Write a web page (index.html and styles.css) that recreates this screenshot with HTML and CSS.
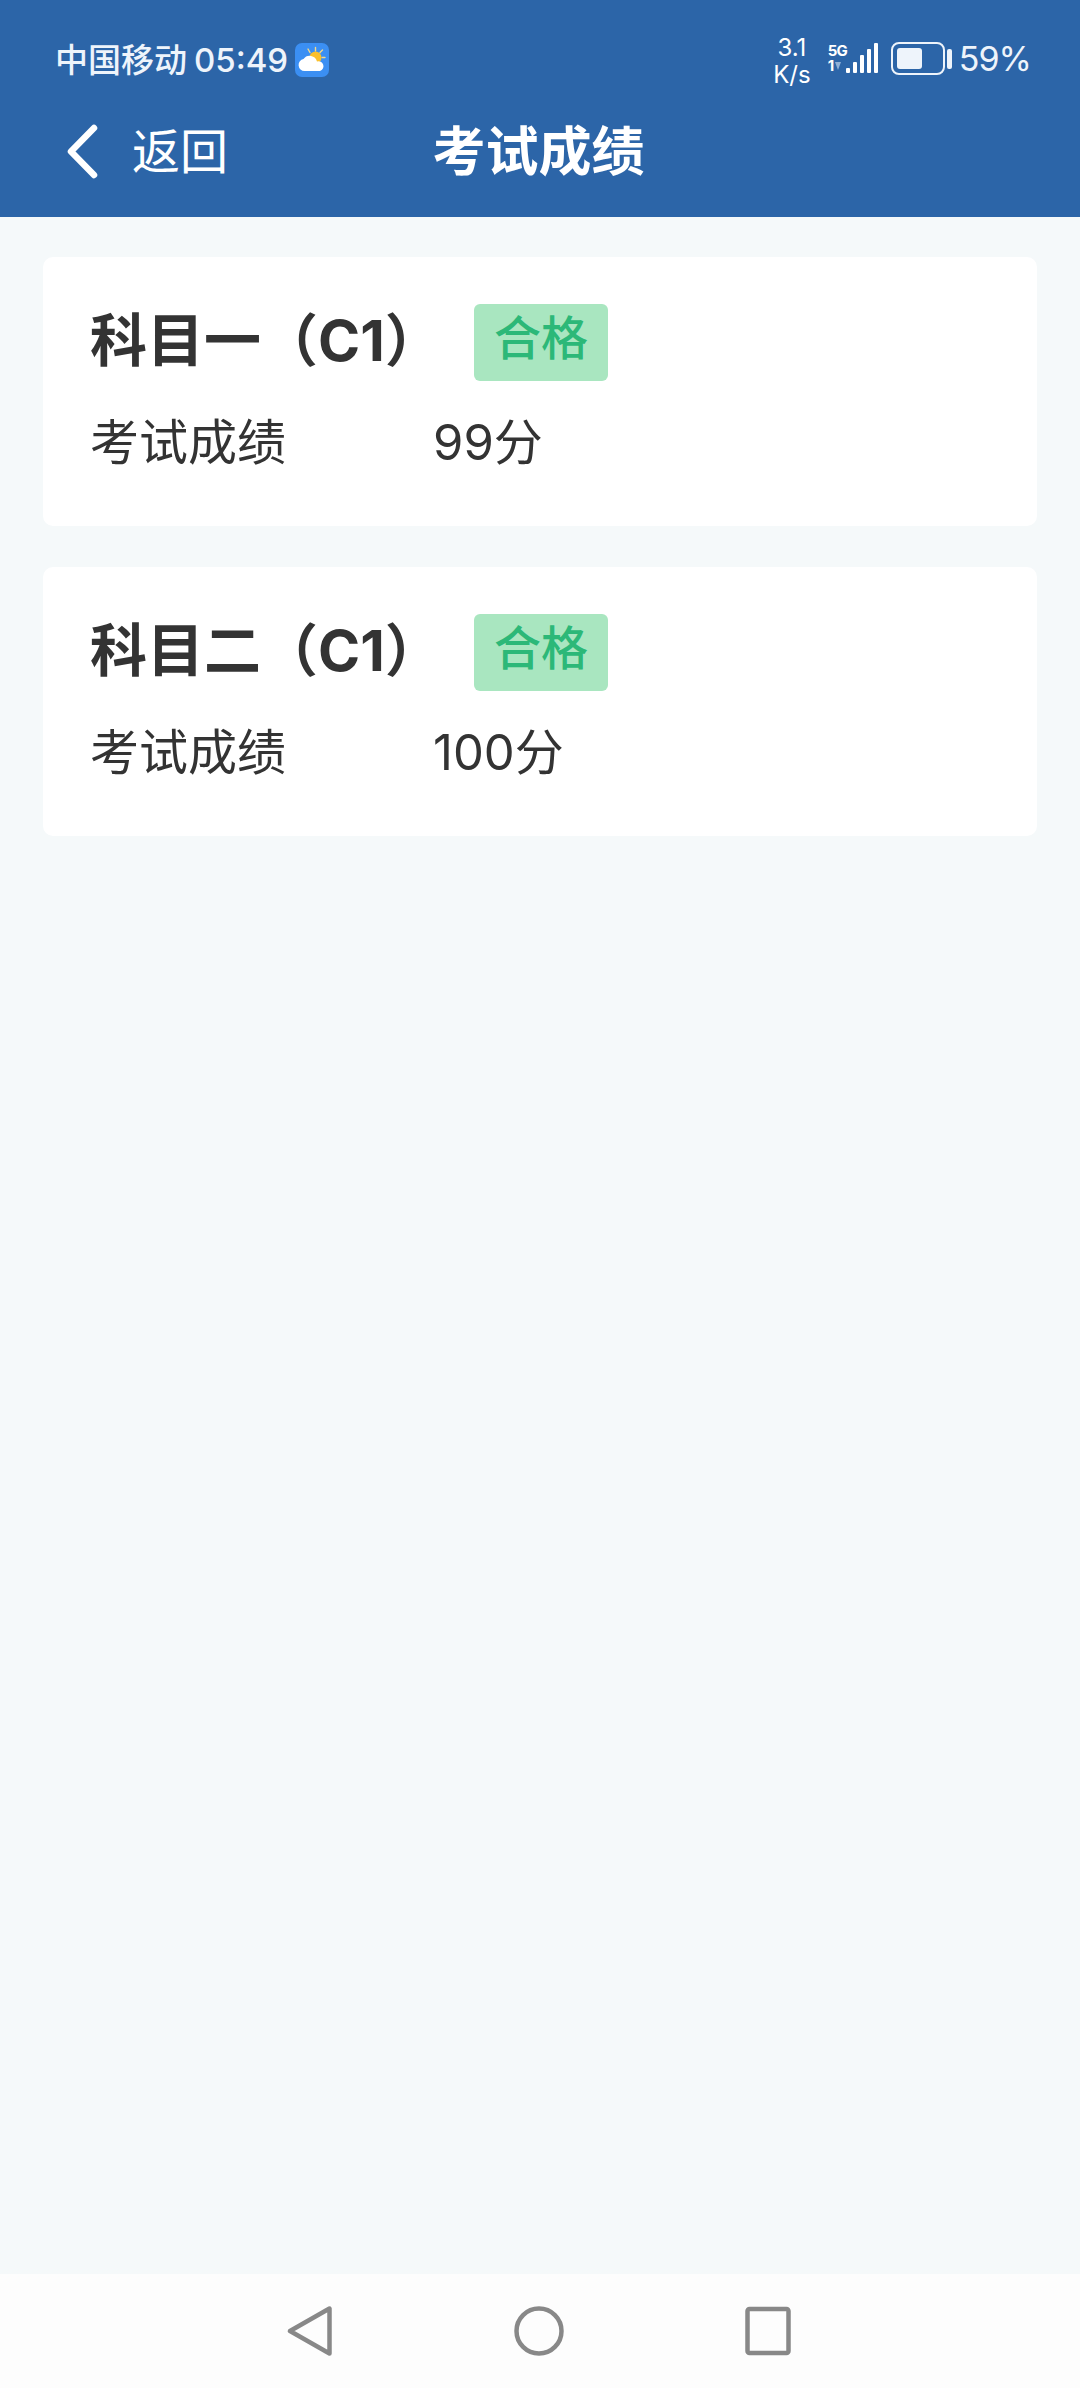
FILE: index.html
```html
<!DOCTYPE html>
<html lang="zh-CN">
<head>
<meta charset="utf-8">
<title>考试成绩</title>
<link rel="stylesheet" href="styles.css">
</head>
<body>
<header class="top">
  <div class="status">
    <div class="status-left">
      <span class="carrier">中国移动</span>
      <span class="time">05:49</span>
      <svg class="weather" viewBox="0 0 34 34" aria-hidden="true">
        <rect width="34" height="34" rx="7" fill="#3b8ff3"/>
        <g stroke="#f3d98a" stroke-width="1.4" stroke-linecap="round">
          <path d="M13 6l2 3.500M20.500 4.500v3.500M27.500 7l-2.500 2.500M30 14.500h-3"/>
        </g>
        <circle cx="20.500" cy="14.500" r="6" fill="#fbc02d"/>
        <path d="M9.500 28a6 6 0 0 1-1-11.900 7.500 7.500 0 0 1 13.500 2.400 4.800 4.800 0 0 1 3 9.500z" fill="#fff"/>
      </svg>
    </div>
    <div class="status-right">
      <div class="speed"><span>3.1</span><span>K/s</span></div>
      <div class="net"><span>5G</span><span class="net-low">1<i class="arrow"></i></span></div>
      <div class="bars">
        <i class="bar b1"></i><i class="bar b2"></i><i class="bar b3"></i><i class="bar b4"></i><i class="bar b5"></i>
      </div>
      <div class="battery"><div class="cell"><div class="charge"></div></div><i class="nub"></i></div>
      <span class="percent">59%</span>
    </div>
  </div>
  <nav class="titlebar">
    <div class="back">
      <svg class="chevron" viewBox="0 0 32 56" aria-hidden="true"><path d="M27 4L4 27.500 27 51" fill="none" stroke="#fff" stroke-width="6.500" stroke-linecap="round" stroke-linejoin="round"/></svg>
      <span>返回</span>
    </div>
    <h1 class="page-title">考试成绩</h1>
  </nav>
</header>
<main class="content">
  <section class="card">
    <div class="card-head"><h2 class="subject">科目一（C1）</h2><span class="badge">合格</span></div>
    <div class="score"><span class="score-label">考试成绩</span><span>99分</span></div>
  </section>
  <section class="card">
    <div class="card-head"><h2 class="subject">科目二（C1）</h2><span class="badge">合格</span></div>
    <div class="score"><span class="score-label">考试成绩</span><span>100分</span></div>
  </section>
</main>
<footer class="navbar">
  <svg class="nav-icon" viewBox="0 0 46 52" aria-hidden="true"><path d="M42.500 3.500v45L3 26z" fill="none" stroke="#888" stroke-width="4.500" stroke-linejoin="round"/></svg>
  <svg class="nav-icon" viewBox="0 0 50 52" aria-hidden="true"><circle cx="25" cy="26" r="22.500" fill="none" stroke="#888" stroke-width="4.500"/></svg>
  <svg class="nav-icon" viewBox="0 0 46 52" aria-hidden="true"><rect x="2.500" y="4" width="41" height="44" rx="2" fill="none" stroke="#888" stroke-width="4.500"/></svg>
</footer>
</body>
</html>
```
FILE: styles.css
```css
* { box-sizing: border-box; }
html, body { margin: 0; height: 100%; }
body {
  display: flex;
  flex-direction: column;
  width: 1080px;
  height: 2388px;
  background: #f5f9fa;
  font-family: Inter, "Noto Sans CJK SC", sans-serif;
  color: #333;
}
.top { height: 217px; background: #2c65a8; color: #fff; flex: none; }
.status {
  height: 95px;
  padding: 26px 49px 0 55px;
  display: flex;
  justify-content: space-between;
  align-items: flex-start;
}
.status-left { display: flex; align-items: center; height: 68px; color: #eef4fb; }
.carrier { font-size: 33px; font-weight: 500; line-height: 1; }
.time { font-size: 33px; font-weight: 500; line-height: 1; margin-left: 7px; }
.weather { width: 34px; height: 34px; margin-left: 7px; }
.status-right { display: flex; align-items: flex-start; height: 68px; }
.speed {
  display: flex;
  flex-direction: column;
  align-items: center;
  width: 38px;
  margin-top: 8px;
  font-size: 24px;
  line-height: 27px;
}
.net {
  display: flex;
  flex-direction: column;
  width: 18px;
  margin: 16px 0 0 17px;
  font-size: 15px;
  font-weight: 700;
  line-height: 17px;
  letter-spacing: -1px;
}
.net-low { display: flex; align-items: center; height: 13px; }
.arrow {
  width: 0;
  height: 0;
  margin-left: 2px;
  border-left: 3px solid transparent;
  border-right: 3px solid transparent;
  border-top: 8px solid #8fb0d6;
}
.bars { display: flex; align-items: flex-end; gap: 3px; height: 30px; margin: 17px 0 0 0; }
.bar { width: 4px; background: #fff; border-radius: 1px; }
.b1 { height: 5px; }
.b2 { height: 11px; }
.b3 { height: 18px; }
.b4 { height: 24px; }
.b5 { height: 30px; }
.battery { display: flex; align-items: center; height: 33px; margin: 16px 0 0 13px; }
.cell {
  width: 54px;
  height: 33px;
  padding: 4px;
  border: 2.500px solid #eef4fb;
  border-radius: 8px;
}
.charge { width: 25px; height: 100%; background: #eef4fb; border-radius: 3px; }
.nub { width: 5px; height: 20px; margin-left: 2px; background: #eef4fb; border-radius: 2px; }
.percent { font-size: 34px; line-height: 68px; margin-left: 7px; margin-top: -1px; letter-spacing: -1px; color: #eef4fb; }
.titlebar { position: relative; height: 122px; display: flex; align-items: center; justify-content: center; }
.back {
  position: absolute;
  left: 67px;
  top: 1px;
  height: 112px;
  display: flex;
  align-items: center;
  font-size: 48px;
}
.back span { margin-left: 33px; margin-top: -9px; }
.chevron { width: 32px; height: 56px; }
.page-title { margin: 0 3px 6px 0; font-size: 53px; font-weight: 700; line-height: 1.2; }
.content {
  flex: 1;
  display: flex;
  flex-direction: column;
  gap: 41px;
  padding: 40px 43px;
}
.card {
  height: 269px;
  padding: 47px 47px 0;
  background: #fff;
  border-radius: 10px;
}
.card-head { display: flex; align-items: center; height: 77px; }
.subject { margin: 0 0 4px; width: 384px; font-size: 57px; font-weight: 700; line-height: 1; }
.badge {
  width: 134px;
  height: 77px;
  background: #a9e6c0;
  color: #2cb878;
  border-radius: 6px;
  font-size: 47px;
  font-weight: 500;
  line-height: 68px;
  text-align: center;
}
.score { display: flex; margin-top: 27px; font-size: 49px; font-weight: 400; line-height: 70px; }
.score-label { width: 343px; }
.navbar {
  flex: none;
  height: 114px;
  background: #fdfdfd;
  display: flex;
  align-items: center;
  padding-left: 287px;
  gap: 181px;
}
.nav-icon { height: 52px; width: auto; }
```
